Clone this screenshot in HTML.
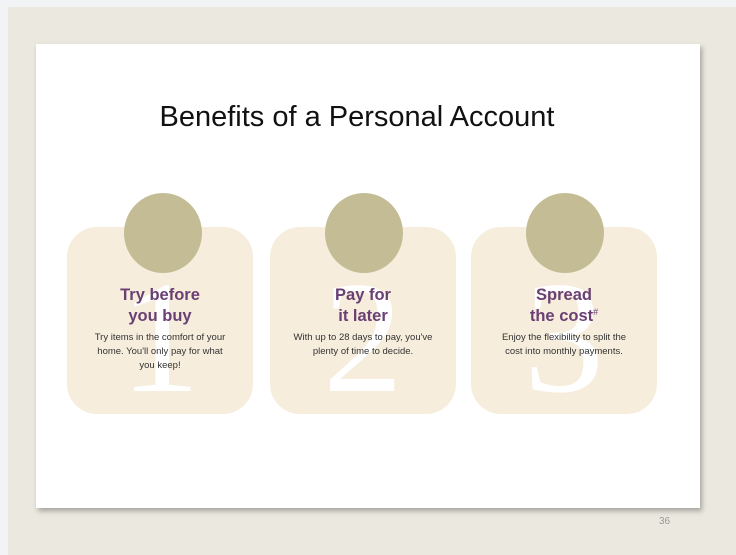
<!DOCTYPE html><html><head><style>
body{margin:0;width:736px;height:555px;background:#f1f3f5;position:relative;overflow:hidden;font-family:"Liberation Sans",sans-serif}
.bg{position:absolute;left:8px;top:7px;right:0;bottom:0;background:#ebe8df}
.slide{position:absolute;left:36px;top:44px;width:664px;height:464px;background:#fff;box-shadow:2px 3px 5px rgba(0,0,0,.3)}
h1{position:absolute;left:0;width:736px;top:101px;margin:0;font-weight:normal;font-size:29px;color:#111;text-align:center;text-indent:-22px;white-space:nowrap}
.card{position:absolute;top:227px;width:186px;height:187px;background:#f6eddc;border-radius:30px;overflow:hidden;text-align:center}
.circ{position:absolute;top:193px;width:78px;height:80px;border-radius:50%;background:#c4bc94}
.num{position:absolute;left:0;width:100%;top:30px;font-family:"Liberation Serif",serif;font-size:160px;color:#fff;line-height:160px}
.t{position:absolute;left:0;width:100%;top:58px;color:#6a3f73;font-weight:bold;font-size:16.5px;line-height:21px}
.t sup{font-size:9px;font-weight:normal;line-height:0;vertical-align:6px}
.d{position:absolute;left:22px;right:22px;top:104px;color:#333;font-size:9.5px;line-height:14px}
.pn{position:absolute;left:659px;top:516px;font-size:10px;color:#999}
</style></head><body>
<div class="bg"></div>
<div class="slide"></div>
<h1>Benefits of a Personal Account</h1>
<div class="card" style="left:67px"><div class="num">1</div><div class="t">Try before<br>you buy</div><div class="d">Try items in the comfort of your home. You'll only pay for what you keep!</div></div>
<div class="card" style="left:270px"><div class="num">2</div><div class="t">Pay for<br>it later</div><div class="d">With up to 28 days to pay, you've plenty of time to decide.</div></div>
<div class="card" style="left:471px"><div class="num">3</div><div class="t">Spread<br>the cost<sup>#</sup></div><div class="d">Enjoy the flexibility to split the cost into monthly payments.</div></div>
<div class="circ" style="left:124px"></div>
<div class="circ" style="left:325px"></div>
<div class="circ" style="left:526px"></div>
<div class="pn">36</div>
</body></html>
